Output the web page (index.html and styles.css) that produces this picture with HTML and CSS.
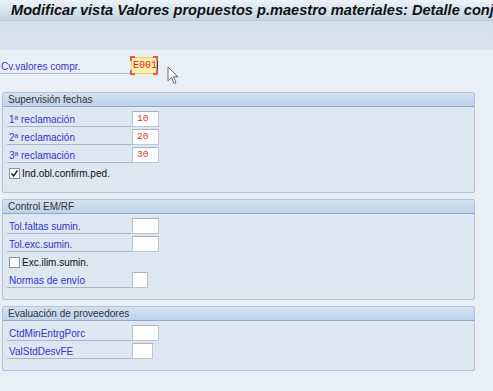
FILE: index.html
```html
<!DOCTYPE html>
<html lang="es">
<head>
  <meta charset="UTF-8">
  <title>Modificar vista Valores propuestos</title>
  <link rel="stylesheet" href="styles.css">
</head>
<body>
  <div class="titlebar">
    <h1>Modificar vista Valores propuestos p.maestro materiales: Detalle conj</h1>
  </div>
  <div class="toolbar"></div>

  <main class="content">
    <div class="key-row">
      <label class="lbl key-lbl">Cv.valores compr.</label>
      <span class="key-field">E001<span class="caret"></span></span>
      <svg class="pointer" width="12" height="19" viewBox="0 0 12 19">
        <path d="M1 1 L1 15 L4.5 11.5 L7 17.5 L9 16.6 L6.6 10.8 L11 10.8 Z" fill="#fff" stroke="#6a6a6a" stroke-width="1" stroke-linejoin="round"/>
      </svg>
    </div>

    <section class="group">
      <div class="group-head">Supervisión fechas</div>
      <div class="group-body">
        <div class="row"><label class="lbl">1ª reclamación</label><span class="field">10</span></div>
        <div class="row"><label class="lbl">2ª reclamación</label><span class="field">20</span></div>
        <div class="row"><label class="lbl">3ª reclamación</label><span class="field">30</span></div>
        <div class="row check-row"><span class="box checked">
          <svg width="9" height="9" viewBox="0 0 9 9"><path d="M1.5 4.5 L3.5 7 L7.5 1.5" fill="none" stroke="#222" stroke-width="1.5"/></svg>
        </span>Ind.obl.confirm.ped.</div>
      </div>
    </section>

    <section class="group">
      <div class="group-head">Control EM/RF</div>
      <div class="group-body">
        <div class="row"><label class="lbl">Tol.faltas sumin.</label><span class="field"></span></div>
        <div class="row"><label class="lbl">Tol.exc.sumin.</label><span class="field"></span></div>
        <div class="row check-row"><span class="box"></span>Exc.ilim.sumin.</div>
        <div class="row"><label class="lbl">Normas de envío</label><span class="field short"></span></div>
      </div>
    </section>

    <section class="group">
      <div class="group-head">Evaluación de proveedores</div>
      <div class="group-body">
        <div class="row"><label class="lbl">CtdMinEntrgPorc</label><span class="field"></span></div>
        <div class="row"><label class="lbl">ValStdDesvFE</label><span class="field mid"></span></div>
      </div>
    </section>
  </main>
</body>
</html>
```

FILE: styles.css
```css
* { margin: 0; padding: 0; box-sizing: border-box; }

body {
  font-family: Tahoma, 'DejaVu Sans', 'Liberation Sans', sans-serif;
  background: #e9eff5;
  color: #222;
  overflow: hidden;
  width: 493px;
  height: 391px;
}

.titlebar {
  height: 21px;
  background: linear-gradient(#edf2f8, #dbe5ef 40%, #c3d3e4);
  border-bottom: 1px solid #b9cadb;
  white-space: nowrap;
  overflow: hidden;
}

.titlebar h1 {
  font-family: 'Liberation Sans', sans-serif;
  font-size: 14.6px; font-weight: bold; font-style: italic;
  color: #111; line-height: 20px; padding-left: 11px;
}

.toolbar {
  height: 29px;
  background: linear-gradient(#d3dfea, #d8e2ed);
  border-bottom: 1px solid #e2e9f1;
}

.content { padding: 6px 0 0 2px; }

.lbl {
  font-family: 'Liberation Sans', sans-serif;
  font-size: 10px; color: #3535c8;
  border-bottom: 1px solid #a9b6c4;
  height: 16px; line-height: 17px;
  width: 125px; padding-left: 2px;
  margin-left: 4px;
}

.key-row { display: flex; align-items: flex-start; height: 36px; padding-top: 1px; }
.key-row .key-lbl { margin-left: -2px; width: 131px; padding-left: 1px; height: 16px; margin-top: 1px; }

.key-field {
  position: relative;
  width: 26px; height: 17px;
  background: #fbf0a6;
  border: 1px solid #e5cf7a;
  font-family: 'Liberation Mono', monospace;
  font-size: 10px; line-height: 15px; color: #d2262b;
  padding-left: 1px;
  white-space: nowrap;
}

/* red focus corners */
.key-field::before {
  content: "";
  position: absolute; inset: -2px;
  background:
    linear-gradient(#e05a5a, #e05a5a) left top / 5px 2px,
    linear-gradient(#e05a5a, #e05a5a) left top / 2px 5px,
    linear-gradient(#e05a5a, #e05a5a) right top / 5px 2px,
    linear-gradient(#e05a5a, #e05a5a) right top / 2px 5px,
    linear-gradient(#e05a5a, #e05a5a) left bottom / 5px 2px,
    linear-gradient(#e05a5a, #e05a5a) left bottom / 2px 5px,
    linear-gradient(#e05a5a, #e05a5a) right bottom / 5px 2px,
    linear-gradient(#e05a5a, #e05a5a) right bottom / 2px 5px;
  background-repeat: no-repeat;
}

.caret { display: inline-block; width: 1px; height: 11px; background: #333; vertical-align: -2px; }

.pointer { margin: 9px 0 0 10px; }

.group {
  width: 473px;
  border: 1px solid #b0c3d8;
  border-radius: 2px;
  background: #dce7f2;
  margin-bottom: 6px;
}

.group-head {
  height: 14px;
  background: linear-gradient(#d3e1f0, #bfd3ea);
  border-bottom: 1px solid #8fa9c7;
  font-family: 'Liberation Sans', sans-serif;
  font-size: 10px; color: #333;
  line-height: 14px; padding-left: 5px;
}

.group-body { padding: 3px 0 10px; }

.row { display: flex; align-items: center; height: 18px; }

.field {
  width: 27px; height: 16px;
  background: #fff;
  border: 1px solid #bcc6d1;
  border-top-color: #a7b3c0;
  font-family: 'Liberation Mono', monospace;
  font-size: 9.5px; color: #d03a3a;
  line-height: 14px; padding-left: 4px;
  align-self: flex-end; margin-bottom: 1px;
}
.field.short { width: 16px; }
.field.mid { width: 21px; }

.check-row {
  font-family: 'Liberation Sans', sans-serif;
  font-size: 10px; color: #111;
  padding-left: 6px;
}

.box {
  width: 11px; height: 11px;
  background: #fff;
  border: 1px solid #8894a3;
  margin-right: 2px;
  display: flex; align-items: center; justify-content: center;
}
```
